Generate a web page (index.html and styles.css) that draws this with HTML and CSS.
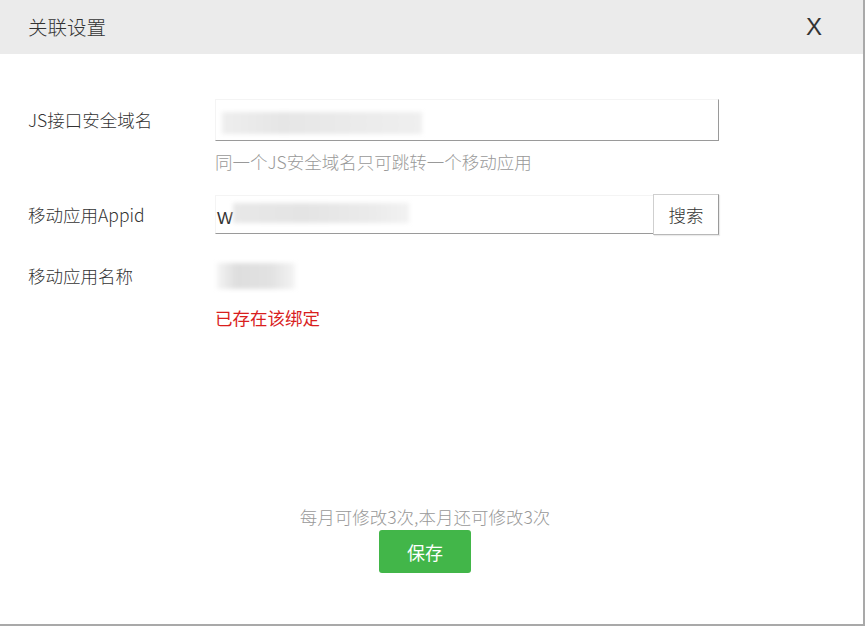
FILE: index.html
```html
<!DOCTYPE html>
<html lang="zh-CN">
<head>
<meta charset="utf-8">
<title>关联设置</title>
<link rel="stylesheet" href="styles.css">
</head>
<body>
<div class="dialog">
  <div class="header">
    <span class="title">关联设置</span>
    <span class="close">X</span>
  </div>
  <div class="form">
    <div class="row row-domain">
      <div class="label">JS接口安全域名</div>
      <div class="field field-domain">
        <span class="blur blur-domain"></span>
      </div>
    </div>
    <div class="row">
      <div></div>
      <div class="hint">同一个JS安全域名只可跳转一个移动应用</div>
    </div>
    <div class="row row-appid">
      <div class="label">移动应用Appid</div>
      <div class="field field-appid">
        <span class="value">W</span>
        <span class="blur blur-appid"></span>
        <button class="search">搜索</button>
      </div>
    </div>
    <div class="row row-name">
      <div class="label">移动应用名称</div>
      <div class="name"><span class="blur blur-name"></span></div>
    </div>
    <div class="row">
      <div></div>
      <div class="error">已存在该绑定</div>
    </div>
  </div>
  <div class="footer">
    <div class="quota">每月可修改3次,本月还可修改3次</div>
    <button class="save">保存</button>
  </div>
</div>
</body>
</html>
```
FILE: styles.css
```css
html, body {
  margin: 0;
  padding: 0;
  background: #ffffff;
}
body {
  font-family: "Noto Sans CJK SC", "Liberation Sans", sans-serif;
  color: #333333;
}
.dialog {
  width: 863px;
  height: 624px;
  border-right: 2px solid #a9a9a9;
  border-bottom: 2px solid #a9a9a9;
  display: flex;
  flex-direction: column;
  background: #ffffff;
}
.header {
  height: 54px;
  flex: none;
  background: #ebebeb;
  display: flex;
  align-items: center;
  justify-content: space-between;
  padding: 0 41px 0 28px;
}
.title {
  font-size: 19.5px;
  color: #333333;
  line-height: 1;
  font-weight: 300;
}
.close {
  font-family: "Liberation Sans", sans-serif;
  font-size: 24px;
  color: #333333;
  line-height: 1;
}
.form {
  padding: 45px 0 0 28px;
}
.row {
  display: grid;
  grid-template-columns: 187px 504px;
  align-items: center;
}
.label {
  font-size: 17.5px;
  color: #333333;
  line-height: 24px;
  font-weight: 300;
}
.field {
  box-sizing: border-box;
  border-right: 1px solid #9a9a9a;
  border-bottom: 1px solid #9a9a9a;
  border-top: 1px solid #f4f4f4;
  border-left: 1px solid #f4f4f4;
  display: flex;
  align-items: center;
  background: #ffffff;
}
.field-domain {
  height: 42px;
  padding-left: 6px;
}
.blur {
  display: block;
  filter: blur(2px);
}
.blur-domain {
  width: 200px;
  height: 22px;
  margin-top: 6px;
  background: linear-gradient(90deg, #eeeeee 0%, #e6e6e6 30%, #eaeaea 60%, #efefef 100%);
}
.hint {
  margin-top: 9px;
  font-size: 17.5px;
  line-height: 24px;
  color: #999999;
  white-space: nowrap;
  font-weight: 300;
}
.row-appid {
  margin-top: 21px;
}
.field-appid {
  height: 39px;
  padding-left: 1px;
}
.value {
  font-family: "Liberation Sans", sans-serif;
  font-size: 17px;
  color: #333333;
  margin-top: 8px;
}
.blur-appid {
  width: 176px;
  height: 20px;
  margin-left: 0;
  margin-top: -4px;
  background: linear-gradient(90deg, #e8e8e8 0%, #e4e4e4 40%, #ebebeb 80%, #f2f2f2 100%);
}
.search {
  margin-left: auto;
  margin-right: -1px;
  height: 41px;
  width: 66px;
  align-self: center;
  box-sizing: border-box;
  border: 1px solid #cfcfcf;
  border-right-color: #9a9a9a;
  border-bottom-color: #b8b8b8;
  background: #ffffff;
  box-shadow: 1px 1px 1px rgba(0, 0, 0, 0.08);
  font-family: "Noto Sans CJK SC", sans-serif;
  font-size: 17.5px;
  font-weight: 300;
  color: #333333;
  padding: 0;
}
.row-name {
  margin-top: 28px;
}
.name {
  height: 28px;
  display: flex;
  align-items: center;
}
.blur-name {
  width: 78px;
  height: 26px;
  margin-left: 2px;
  background: linear-gradient(90deg, #f4f4f4 0%, #dedede 25%, #e2e2e2 70%, #f4f4f4 100%);
}
.error {
  margin-top: 16px;
  font-size: 17.5px;
  line-height: 24px;
  color: #d91e1e;
  font-weight: 400;
}
.footer {
  margin-top: auto;
  padding: 0 13px 51px 0;
  display: flex;
  flex-direction: column;
  align-items: center;
}
.quota {
  font-size: 17.5px;
  line-height: 24px;
  color: #999999;
  white-space: nowrap;
  font-weight: 300;
}
.save {
  margin-top: 1px;
  width: 92px;
  height: 43px;
  border: none;
  border-radius: 3px;
  background: #42b649;
  color: #ffffff;
  font-family: "Noto Sans CJK SC", sans-serif;
  font-size: 18px;
  font-weight: 400;
  padding: 0;
}
```
